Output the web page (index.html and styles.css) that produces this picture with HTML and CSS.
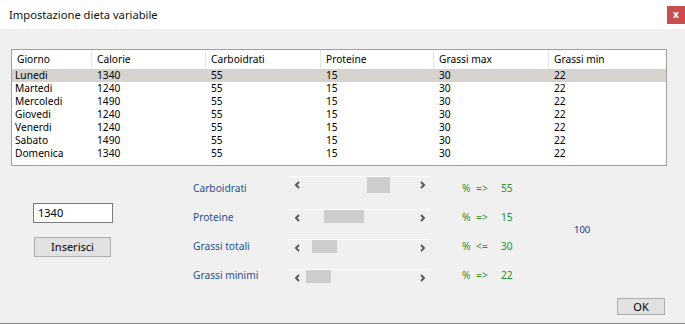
FILE: index.html
```html
<!DOCTYPE html>
<html lang="it">
<head>
    <meta charset="UTF-8">
    <title>Impostazione dieta variabile</title>
    <link rel="stylesheet" href="styles.css">
</head>
<body>
    <div class="window">
        <div class="titlebar">
            <div class="title">Impostazione dieta variabile</div>
            <div class="close">x</div>
        </div>

        <div class="client">
            <div class="grid">
                <div class="grid-head">
                    <div class="cell c1">Giorno</div>
                    <div class="cell c2">Calorie</div>
                    <div class="cell c3">Carboidrati</div>
                    <div class="cell c4">Proteine</div>
                    <div class="cell c5">Grassi max</div>
                    <div class="cell c6">Grassi min</div>
                </div>
                <div class="grid-row selected">
                    <div class="cell c1">Lunedi</div><div class="cell c2">1340</div><div class="cell c3">55</div>
                    <div class="cell c4">15</div><div class="cell c5">30</div><div class="cell c6">22</div>
                </div>
                <div class="grid-row">
                    <div class="cell c1">Martedi</div><div class="cell c2">1240</div><div class="cell c3">55</div>
                    <div class="cell c4">15</div><div class="cell c5">30</div><div class="cell c6">22</div>
                </div>
                <div class="grid-row">
                    <div class="cell c1">Mercoledi</div><div class="cell c2">1490</div><div class="cell c3">55</div>
                    <div class="cell c4">15</div><div class="cell c5">30</div><div class="cell c6">22</div>
                </div>
                <div class="grid-row">
                    <div class="cell c1">Giovedi</div><div class="cell c2">1240</div><div class="cell c3">55</div>
                    <div class="cell c4">15</div><div class="cell c5">30</div><div class="cell c6">22</div>
                </div>
                <div class="grid-row">
                    <div class="cell c1">Venerdi</div><div class="cell c2">1240</div><div class="cell c3">55</div>
                    <div class="cell c4">15</div><div class="cell c5">30</div><div class="cell c6">22</div>
                </div>
                <div class="grid-row">
                    <div class="cell c1">Sabato</div><div class="cell c2">1490</div><div class="cell c3">55</div>
                    <div class="cell c4">15</div><div class="cell c5">30</div><div class="cell c6">22</div>
                </div>
                <div class="grid-row">
                    <div class="cell c1">Domenica</div><div class="cell c2">1340</div><div class="cell c3">55</div>
                    <div class="cell c4">15</div><div class="cell c5">30</div><div class="cell c6">22</div>
                </div>
            </div>

            <div class="lower">
                <div class="entry">
                    <div class="textbox">1340</div>
                    <div class="btn insert-btn">Inserisci</div>
                </div>

                <div class="labels">
                    <div class="label">Carboidrati</div>
                    <div class="label">Proteine</div>
                    <div class="label">Grassi totali</div>
                    <div class="label">Grassi minimi</div>
                </div>

                <div class="bars">
                    <div class="bar first">
                        <svg class="arrow" width="7" height="8" viewBox="0 0 7 8"><path d="M5 1 L2 4 L5 7"/></svg>
                        <div class="track"><div class="thumb tall" style="margin-left: 66px; width: 23px"></div></div>
                        <svg class="arrow" width="7" height="8" viewBox="0 0 7 8"><path d="M2 1 L5 4 L2 7"/></svg>
                    </div>
                    <div class="bar">
                        <svg class="arrow" width="7" height="8" viewBox="0 0 7 8"><path d="M5 1 L2 4 L5 7"/></svg>
                        <div class="track"><div class="thumb" style="margin-left: 23px; width: 40px"></div></div>
                        <svg class="arrow" width="7" height="8" viewBox="0 0 7 8"><path d="M2 1 L5 4 L2 7"/></svg>
                    </div>
                    <div class="bar">
                        <svg class="arrow" width="7" height="8" viewBox="0 0 7 8"><path d="M5 1 L2 4 L5 7"/></svg>
                        <div class="track"><div class="thumb" style="margin-left: 11px; width: 25px"></div></div>
                        <svg class="arrow" width="7" height="8" viewBox="0 0 7 8"><path d="M2 1 L5 4 L2 7"/></svg>
                    </div>
                    <div class="bar">
                        <svg class="arrow" width="7" height="8" viewBox="0 0 7 8"><path d="M5 1 L2 4 L5 7"/></svg>
                        <div class="track"><div class="thumb" style="margin-left: 5px; width: 25px"></div></div>
                        <svg class="arrow" width="7" height="8" viewBox="0 0 7 8"><path d="M2 1 L5 4 L2 7"/></svg>
                    </div>
                </div>

                <div class="percents">
                    <div class="pct">% =&gt;</div>
                    <div class="pct">% =&gt;</div>
                    <div class="pct">% &lt;=</div>
                    <div class="pct">% =&gt;</div>
                </div>

                <div class="values">
                    <div class="pct">55</div>
                    <div class="pct">15</div>
                    <div class="pct">30</div>
                    <div class="pct">22</div>
                </div>

                <div class="total">100</div>

                <div class="btn ok-btn">OK</div>
            </div>
        </div>
    </div>
</body>
</html>
```

FILE: styles.css
```css
body {
    margin: 0;
    font-family: 'Noto Sans', 'Open Sans', sans-serif;
    font-size: 10.2px;
    color: #000;
    background: #f0f0f0;
}
.window {
    width: 685px;
    height: 324px;
    display: flex;
    flex-direction: column;
    overflow: hidden;
}
.titlebar {
    height: 29px;
    background: white;
    display: flex;
    justify-content: space-between;
    align-items: flex-start;
}
.title {
    padding-left: 9px;
    line-height: 29px;
    font-size: 11.2px;
    color: #111;
}
.close {
    width: 18px;
    height: 18px;
    margin-top: 6px;
    background: #c94f4f;
    color: white;
    font-weight: bold;
    font-size: 10px;
    line-height: 16px;
    text-align: center;
}
.client {
    flex: 1;
    display: flex;
    flex-direction: column;
    background: #f0f0f0;
    border-bottom: 1px solid #8c8c8c;
}

/* data grid */
.grid {
    width: 654px;
    height: 115px;
    margin: 20px 0 0 11px;
    border: 1px solid #a0a0a0;
    background: white;
}
.grid-head, .grid-row {
    display: flex;
}
.grid-head {
    height: 19px;
}
.grid-head .cell {
    line-height: 19px;
    padding-left: 5px;
    border-right: 1px solid #e5e5e5;
}
.grid-row .cell {
    line-height: 13px;
    padding-left: 5px;
    border-right: 1px solid transparent;
}
.grid-row .c1 {
    padding-left: 3px;
}
.grid-row.selected {
    background: #d6d2cd;
}
.cell {
    box-sizing: border-box;
    white-space: nowrap;
}
.grid .c1 { width: 80px; }
.grid .c2 { width: 114px; }
.grid .c3 { width: 115px; }
.grid .c4 { width: 113px; }
.grid .c5 { width: 115px; }
.grid .c6 { width: 117px; border-right: none; }

/* lower controls */
.lower {
    flex: 1;
    display: flex;
    align-items: flex-start;
}
.entry {
    margin: 37px 0 0 33px;
    width: 80px;
}
.textbox {
    box-sizing: border-box;
    width: 80px;
    height: 20px;
    border: 1px solid #7a7a7a;
    background: white;
    padding-left: 4px;
    line-height: 18px;
    font-size: 11px;
}
.btn {
    box-sizing: border-box;
    background: #e1e1e1;
    border: 1px solid #adadad;
    text-align: center;
    font-size: 11px;
}
.insert-btn {
    width: 77px;
    height: 20px;
    margin: 14px 0 0 1px;
    line-height: 18px;
}
.labels {
    margin: 14px 0 0 80px;
    width: 95px;
    display: flex;
    flex-direction: column;
    gap: 13px;
}
.label {
    line-height: 16px;
    color: #1e4f91;
}
.bars {
    margin-top: 10px;
    width: 143px;
    display: flex;
    flex-direction: column;
    gap: 13px;
}
.bar.first {
    margin-bottom: 3px;
}
.bar {
    height: 17px;
    box-sizing: border-box;
    border-top: 1px solid white;
    display: flex;
    align-items: center;
    padding: 0 5px 0 6px;
}
.arrow path {
    fill: none;
    stroke: #5a5a5a;
    stroke-width: 2;
}
.track {
    flex: 1;
    align-self: flex-start;
    display: flex;
}
.thumb {
    height: 13px;
    background: #cdcdcd;
}
.thumb.tall {
    height: 16px;
}
.percents {
    margin: 14px 0 0 31px;
    width: 39px;
    display: flex;
    flex-direction: column;
    gap: 13px;
}
.values {
    margin-top: 14px;
    width: 30px;
    display: flex;
    flex-direction: column;
    gap: 13px;
}
.pct {
    line-height: 16px;
    color: #2a8c2a;
    white-space: nowrap;
    word-spacing: 3px;
}
.total {
    margin: 56px 0 0 43px;
    line-height: 16px;
    font-size: 9.5px;
    color: #1f2a80;
}
.ok-btn {
    margin: 0 20px 8px auto;
    align-self: flex-end;
    width: 48px;
    height: 17px;
    line-height: 15px;
}
```
